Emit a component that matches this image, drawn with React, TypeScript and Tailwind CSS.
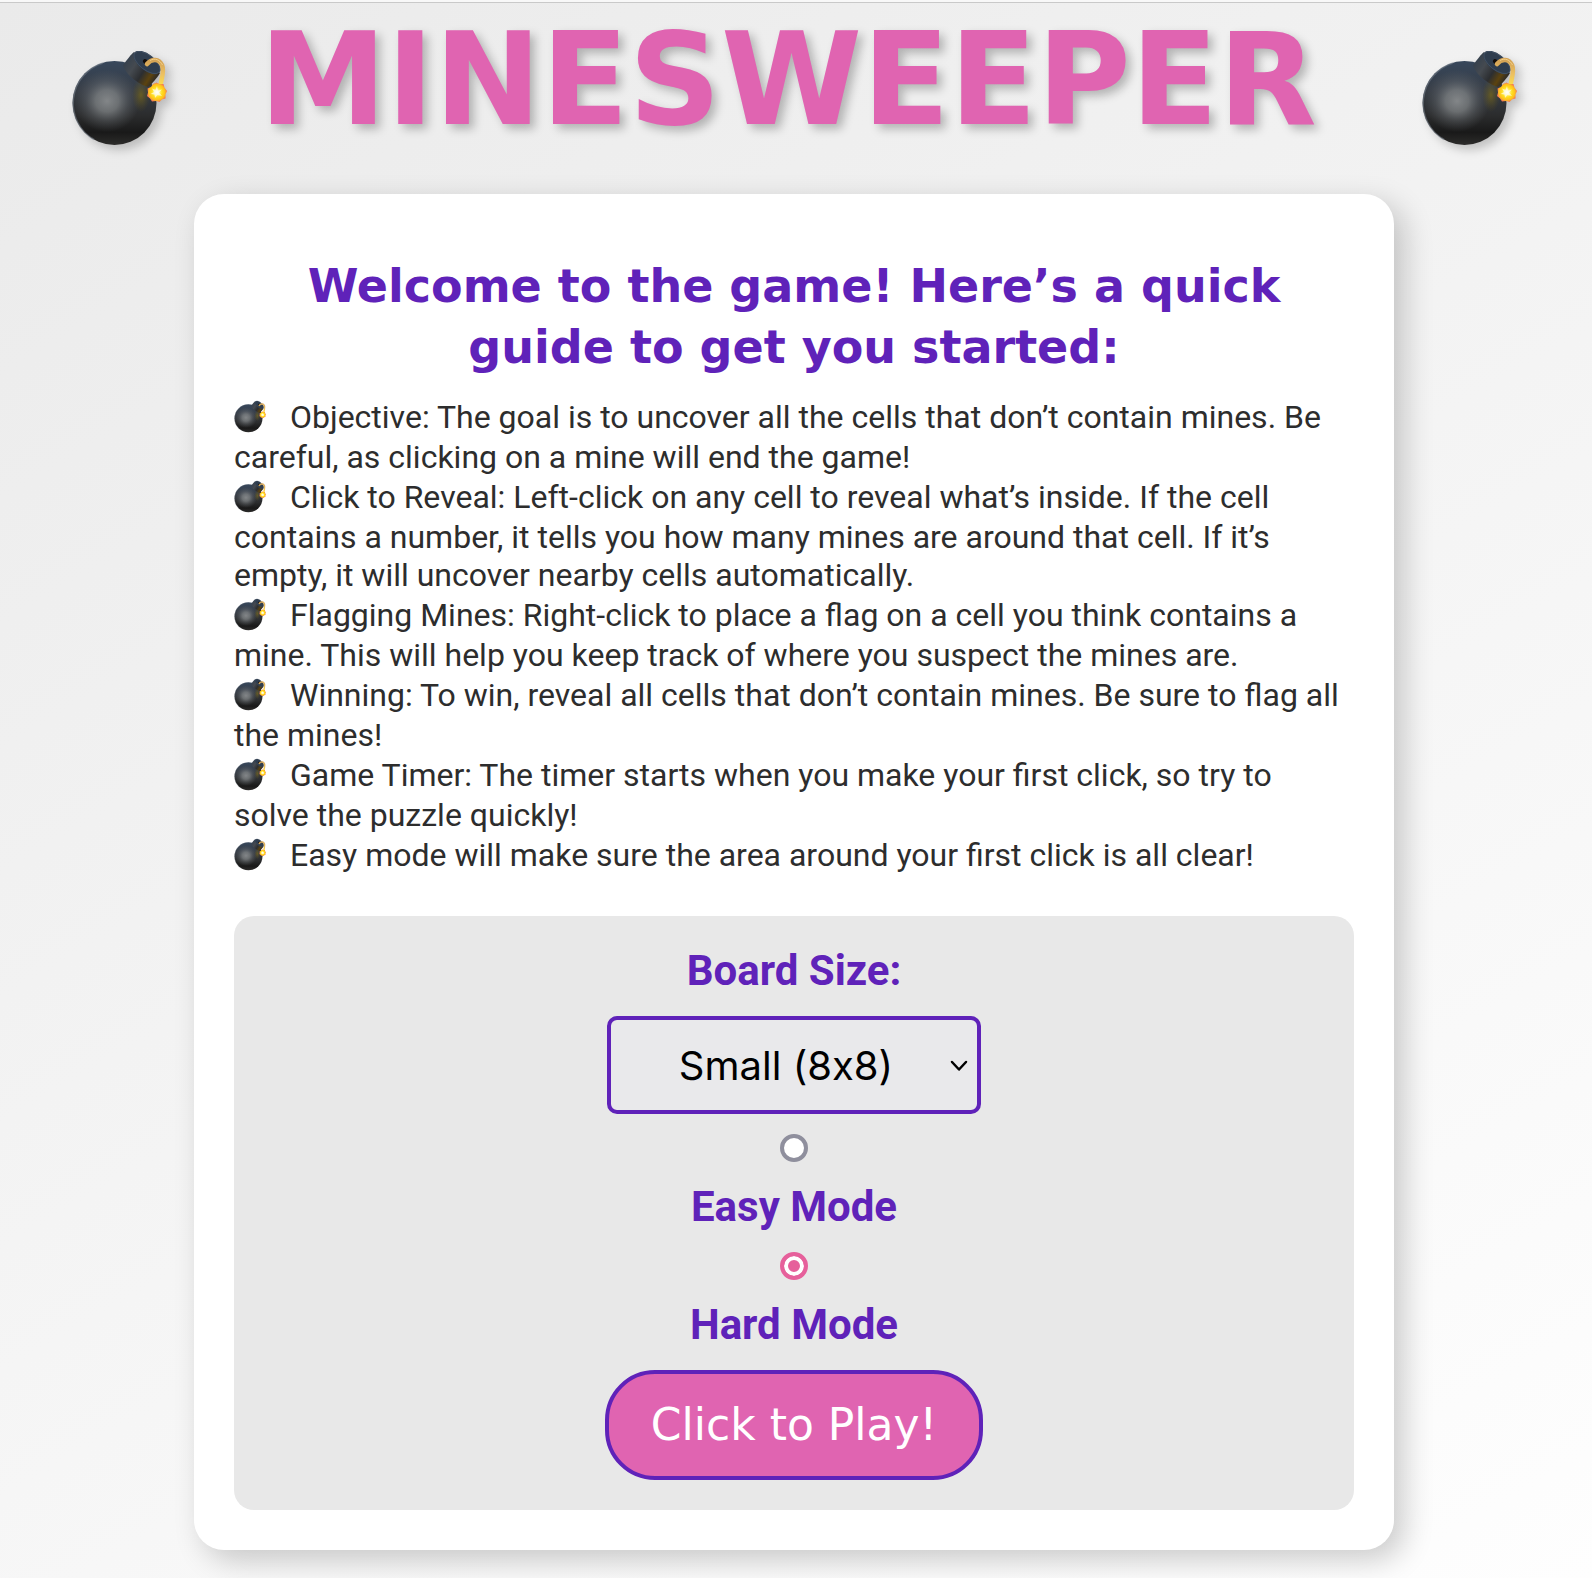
import { useId, useState } from "react";

function Bomb({ className }: { className: string }) {
  const id = useId().replace(/[^a-zA-Z0-9]/g, "");
  const ref = (name: string) => `url(#${id}${name})`;
  return (
    <svg viewBox="0 0 96 96" className={className} aria-hidden="true">
      <defs>
        <linearGradient id={`${id}body`} x1="0" y1="0" x2="0" y2="1">
          <stop offset="0" stopColor="#37475b" />
          <stop offset="0.35" stopColor="#363c45" />
          <stop offset="0.65" stopColor="#2b2c2d" />
          <stop offset="0.85" stopColor="#191919" />
          <stop offset="1" stopColor="#2d2c2b" />
        </linearGradient>
        <radialGradient id={`${id}shine`} cx="0.5" cy="0.5" r="0.5">
          <stop offset="0" stopColor="#8c8f91" stopOpacity="0.9" />
          <stop offset="0.35" stopColor="#85898b" stopOpacity="0.7" />
          <stop offset="0.65" stopColor="#70757a" stopOpacity="0.35" />
          <stop offset="1" stopColor="#606468" stopOpacity="0" />
        </radialGradient>
        <radialGradient id={`${id}glow`} cx="0.5" cy="0.5" r="0.5">
          <stop offset="0" stopColor="#8a7412" stopOpacity="0.6" />
          <stop offset="1" stopColor="#6a5a18" stopOpacity="0" />
        </radialGradient>
        <linearGradient id={`${id}neck`} x1="0" y1="0" x2="1" y2="0.6">
          <stop offset="0" stopColor="#2b3a4c" />
          <stop offset="0.4" stopColor="#454a50" />
          <stop offset="0.65" stopColor="#2c2e31" />
          <stop offset="0.85" stopColor="#5c430f" />
          <stop offset="1" stopColor="#2c2a28" />
        </linearGradient>
        <linearGradient id={`${id}fuse`} x1="0" y1="0" x2="0" y2="1">
          <stop offset="0" stopColor="#d3a255" />
          <stop offset="0.5" stopColor="#ecc062" />
          <stop offset="1" stopColor="#ffe445" />
        </linearGradient>
        <radialGradient id={`${id}spark`} cx="0.5" cy="0.5" r="0.5">
          <stop offset="0" stopColor="#ffffff" />
          <stop offset="0.2" stopColor="#fff6a0" />
          <stop offset="0.5" stopColor="#ffe01f" />
          <stop offset="0.8" stopColor="#ffc01c" />
          <stop offset="1" stopColor="#f0745a" />
        </radialGradient>
      </defs>
      <circle cx="43.5" cy="52" r="42" fill={ref("body")} />
      <path d="M32 12 A42 42 0 0 0 23 88.5" fill="none" stroke="#77808a" strokeOpacity="0.55" strokeWidth="1.5" />
      <ellipse cx="36" cy="50" rx="33" ry="31" fill={ref("shine")} />
      <ellipse cx="70" cy="44" rx="9" ry="17" fill={ref("glow")} />
      <path d="M63 1 C61 2 55 10 52 14 C54 23 67 33 77 36 C81 33 86 27 89 22 Z" fill={ref("neck")} />
      <ellipse cx="76" cy="11.5" rx="16" ry="8" transform="rotate(38 76 11.5)" fill="#2f3d4e" />
      <ellipse cx="76" cy="11.5" rx="15.4" ry="7.4" transform="rotate(38 76 11.5)" fill="none" stroke="#46566a" strokeWidth="0.7" />
      <ellipse cx="75" cy="11" rx="3.4" ry="2.2" transform="rotate(38 75 11)" fill="#120d0a" />
      <path d="M76 13 C81 7 88 8 91 14 C94 21 90 28 89 37" fill="none" stroke={ref("fuse")} strokeWidth="4.5" strokeLinecap="round" />
      <path d="M79 9.5 C84 6.5 89 9 91.5 14" fill="none" stroke="#f3d08a" strokeWidth="1" />
      <path
        d="M85.500 31.5 L88.5 33 L92.5 33 L93.5 36.5 L96 40 L94.5 43.5 L94.5 47.5 L91 48.5 L88.5 51 L85 50 L81 50.5 L79 47.5 L76 45 L77 41.5 L76.5 37.5 L80 36 L82 33 Z"
        fill={ref("spark")}
      />
      <path d="M86 35 L87 39.5 L91 38.5 L88 41.5 L91 45 L86.5 44 L84 47 L83.5 43.5 L79.5 43 L83 41 L81 37.5 L84.5 39 Z" fill="#ffffff" fillOpacity="0.65" />
    </svg>
  );
}

const rules = [
  "Objective: The goal is to uncover all the cells that don’t contain mines. Be careful, as clicking on a mine will end the game!",
  "Click to Reveal: Left-click on any cell to reveal what’s inside. If the cell contains a number, it tells you how many mines are around that cell. If it’s empty, it will uncover nearby cells automatically.",
  "Flagging Mines: Right-click to place a flag on a cell you think contains a mine. This will help you keep track of where you suspect the mines are.",
  "Winning: To win, reveal all cells that don’t contain mines. Be sure to flag all the mines!",
  "Game Timer: The timer starts when you make your first click, so try to solve the puzzle quickly!",
  "Easy mode will make sure the area around your first click is all clear!",
];

const radioClass =
  "size-7 shrink-0 appearance-none rounded-full border-4 border-[#8f8f9d] bg-white checked:border-[#e6609b] checked:bg-[#e6609b] checked:shadow-[inset_0_0_0_4px_#fff]";

export default function App() {
  const [mode, setMode] = useState("hard");
  return (
    <div className="flex min-h-screen flex-col border-t-2 border-[#f8f8f8] font-['Roboto',sans-serif]">
      <div className="flex-1 border-t border-[#c9c9c9] bg-[linear-gradient(150deg,#eaeaea,#fefefe)] pr-1 pb-7">
        <header className="flex h-[191px] items-start justify-between px-[71px]">
          <Bomb className="mt-12 size-24 drop-shadow-[5px_5px_5px_rgba(0,0,0,0.2)]" />
          <h1 className="mt-5 pr-3 font-['DejaVu_Sans',sans-serif] text-[128px] leading-[114px] font-bold text-[#e064b1] [text-shadow:5px_5px_10px_rgba(0,0,0,0.25)]">
            MINESWEEPER
          </h1>
          <Bomb className="mt-12 size-24 drop-shadow-[5px_5px_5px_rgba(0,0,0,0.2)]" />
        </header>
        <main className="mx-auto max-w-[1200px] rounded-[30px] bg-white p-10 shadow-[10px_10px_30px_rgba(0,0,0,0.2)]">
          <h2 className="mt-[22px] mb-[18px] text-center font-['DejaVu_Sans',sans-serif] text-[46px] leading-[61px] font-bold text-[#5f22b9]">
            Welcome to the game! Here’s a quick guide to get you started:
          </h2>
          <ul className="text-[32px] leading-[38px] text-[#2d2d2d]">
            {rules.map((rule) => (
              <li key={rule}>
                <Bomb className="mr-6 inline h-[42px] w-8 align-[-10px]" />
                {rule}
              </li>
            ))}
          </ul>
          <form
            className="mt-10 flex flex-col items-center gap-5 rounded-[20px] bg-[#e8e8e8] p-[30px] text-[42px] leading-[50px] font-bold text-[#5f22b9]"
            onSubmit={(e) => e.preventDefault()}
          >
            <label htmlFor="board-size">Board Size:</label>
            <div className="relative">
              <select
                id="board-size"
                className="block h-[98px] w-[374px] appearance-none rounded-[10px] border-4 border-[#5f22b9] bg-[#e9e9eb] pt-0.5 pr-4 text-center font-['Inter',sans-serif] text-[40px] font-normal text-black [font-feature-settings:'calt'_0] [text-align-last:center]"
              >
                <option>Small (8x8)</option>
                <option>Medium (12x12)</option>
                <option>Large (16x16)</option>
              </select>
              <svg viewBox="0 0 18 12" className="pointer-events-none absolute top-11 right-[13px] h-3 w-[18px]" aria-hidden="true">
                <path d="M2 2 L9 9.5 L16 2" fill="none" stroke="#000" strokeWidth="2.5" strokeLinecap="round" strokeLinejoin="round" />
              </svg>
            </div>
            <input id="easy" type="radio" name="mode" className={radioClass} checked={mode === "easy"} onChange={() => setMode("easy")} />
            <label htmlFor="easy">Easy Mode</label>
            <input id="hard" type="radio" name="mode" className={radioClass} checked={mode === "hard"} onChange={() => setMode("hard")} />
            <label htmlFor="hard">Hard Mode</label>
            <button
              type="submit"
              className="h-[110px] w-[378px] rounded-[50px] border-4 border-[#5f22b9] bg-[#e064b1] font-['DejaVu_Sans',sans-serif] text-[44px] font-normal text-white"
            >
              Click to Play!
            </button>
          </form>
        </main>
      </div>
    </div>
  );
}
